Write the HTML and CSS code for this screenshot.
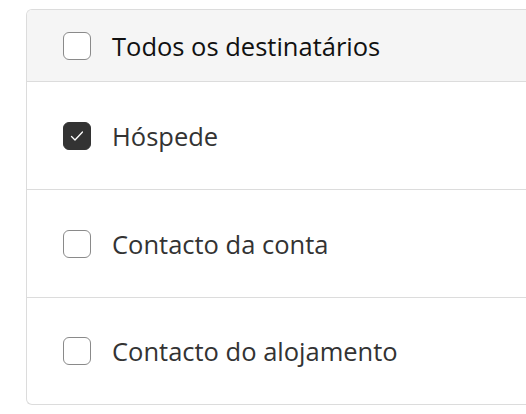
FILE: index.html
```html
<!DOCTYPE html>
<html lang="pt">
<head>
    <meta charset="UTF-8">
    <title>Destinatários</title>
    <link rel="stylesheet" href="styles.css">
</head>
<body>
    <div class="recipients">
        <label class="row header">
            <span class="box"></span>
            <span class="label">Todos os destinatários</span>
        </label>
        <label class="row">
            <span class="box checked">
                <svg viewBox="0 0 28 28" width="28" height="28"><path d="M8.5 14.5l3.5 3.5 7.5-8" fill="none" stroke="#fff" stroke-width="1.3" stroke-linecap="round" stroke-linejoin="round"/></svg>
            </span>
            <span class="label">Hóspede</span>
        </label>
        <label class="row">
            <span class="box"></span>
            <span class="label">Contacto da conta</span>
        </label>
        <label class="row">
            <span class="box"></span>
            <span class="label">Contacto do alojamento</span>
        </label>
    </div>
</body>
</html>
```

FILE: styles.css
```css
* {
    margin: 0;
    padding: 0;
    box-sizing: border-box;
}

body {
    background: #fff;
    padding: 9px 0 0 26px;
    overflow: hidden;
    font-family: "Open Sans", "Noto Sans", sans-serif;
}

.recipients {
    border: 1px solid #dcdcdc;
    border-right: none;
    border-radius: 6px 0 0 6px;
    overflow: hidden;
}

.row {
    display: flex;
    align-items: center;
    gap: 21px;
    height: 108px;
    padding-left: 36px;
    border-bottom: 1px solid #dcdcdc;
    color: #333;
    font-size: 25.5px;
}

.row:last-child {
    border-bottom: none;
    height: 106px;
}

.header {
    height: 72px;
    background: #f5f5f5;
    color: #111;
}

.box {
    width: 28px;
    height: 28px;
    border: 1px solid #8a8a8a;
    border-radius: 6px;
    background: #fff;
    flex-shrink: 0;
}

.box.checked {
    background: #333;
    border-color: #333;
}

.box svg {
    display: block;
    margin: -1px;
}
```
